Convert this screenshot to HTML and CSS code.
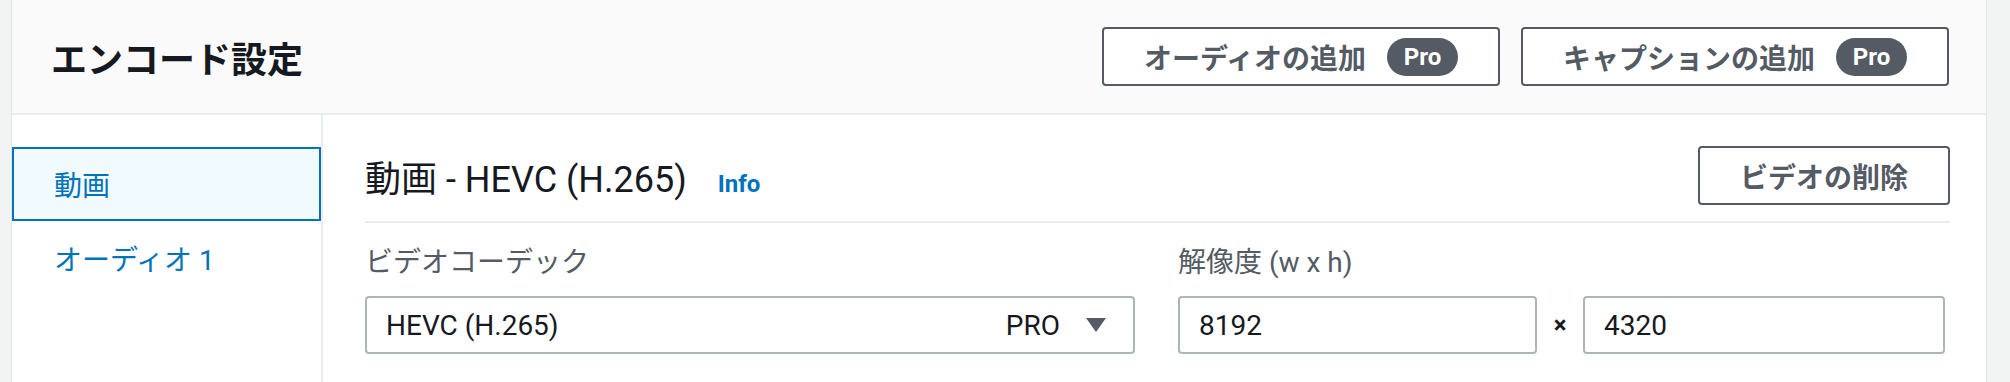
FILE: index.html
```html
<!DOCTYPE html>
<html lang="ja">
<head>
  <meta charset="UTF-8" />
  <title>エンコード設定</title>
  <link rel="stylesheet" href="styles.css">
</head>
<body>

  <div class="page">
    <div class="gutter left"></div>

    <div class="panel">
      <!-- Header -->
      <div class="panel-header">
        <h2 class="panel-title">エンコード設定</h2>
        <div class="actions">
          <button class="btn">オーディオの追加 <span class="badge">Pro</span></button>
          <button class="btn">キャプションの追加 <span class="badge">Pro</span></button>
        </div>
      </div>

      <div class="panel-body">
        <!-- Track list -->
        <div class="side">
          <div class="side-item selected">動画</div>
          <div class="side-item">オーディオ 1</div>
        </div>

        <!-- Video settings -->
        <div class="main">
          <div class="title-row">
            <h3 class="section-title">動画 - HEVC (H.265) <a class="info" href="#">Info</a></h3>
            <button class="btn">ビデオの削除</button>
          </div>

          <div class="fields">
            <div class="field">
              <label>ビデオコーデック</label>
              <div class="select">
                <span class="select-value">HEVC (H.265)</span>
                <span class="select-tag">PRO</span>
                <svg class="caret" width="20" height="14" viewBox="0 0 20 14"><path d="M0 0 H20 L10 14 Z" fill="#545b64"/></svg>
              </div>
            </div>
            <div class="field">
              <label>解像度 (w x h)</label>
              <div class="res-row">
                <input class="text-input w" value="8192">
                <span class="times">×</span>
                <input class="text-input h" value="4320">
              </div>
            </div>
          </div>
        </div>
      </div>
    </div>

    <div class="gutter right"></div>
  </div>

</body>
</html>
```

FILE: styles.css
```css
body {
  margin: 0;
  font-family: Roboto, "Noto Sans CJK JP", sans-serif;
  font-size: 28px;
  color: #16191f;
  background: #fff;
}

.page {
  display: flex;
  width: 2010px;
  height: 382px;
  overflow: hidden;
}

.gutter {
  background: #f2f3f3;
}

.gutter.left {
  width: 11px;
  border-right: 1px solid #e1e4e4;
}

.gutter.right {
  width: 23px;
  border-left: 1px solid #e1e4e4;
}

.panel {
  flex: 1;
  display: flex;
  flex-direction: column;
}

.panel-header {
  display: flex;
  align-items: center;
  justify-content: space-between;
  height: 113px;
  padding: 0 37px 0 39px;
  background: #fafafa;
  border-bottom: 2px solid #eaeded;
}

.panel-title {
  margin: 0;
  font-size: 36px;
  font-weight: 700;
  color: #16191f;
}

.actions {
  display: flex;
  gap: 21px;
}

.btn {
  display: inline-flex;
  align-items: center;
  gap: 21px;
  height: 59px;
  padding: 0 40px;
  border: 2px solid #545b64;
  border-radius: 4px;
  background: #fff;
  color: #545b64;
  font-family: inherit;
  font-size: 28px;
  font-weight: 700;
  cursor: pointer;
}

.badge {
  display: inline-flex;
  align-items: center;
  justify-content: center;
  width: 71px;
  height: 38px;
  border-radius: 19px;
  background: #545b64;
  color: #fff;
  font-size: 24px;
  font-weight: 700;
}

.panel-body {
  flex: 1;
  display: flex;
}

.side {
  width: 309px;
  padding-top: 32px;
  border-right: 2px solid #eaeded;
}

.side-item {
  display: flex;
  align-items: center;
  height: 74px;
  box-sizing: border-box;
  padding-left: 40px;
  border: 2px solid transparent;
  color: #0073bb;
}

.side-item.selected {
  border-color: #0073bb;
  background: #f1faff;
}

.main {
  flex: 1;
  padding: 31px 36px 0 42px;
}

.title-row {
  display: flex;
  align-items: center;
  justify-content: space-between;
  height: 59px;
  padding-bottom: 16px;
  border-bottom: 2px solid #eaeded;
}

.section-title {
  margin: 0;
  font-size: 36px;
  font-weight: 400;
  color: #16191f;
}

.info {
  margin-left: 22px;
  font-size: 24px;
  font-weight: 700;
  color: #0073bb;
  text-decoration: none;
}

.fields {
  display: flex;
  gap: 43px;
  padding-top: 22px;
}

.field label {
  display: block;
  height: 36px;
  line-height: 36px;
  margin-bottom: 15px;
  color: #545b64;
}

.select {
  display: flex;
  align-items: center;
  width: 770px;
  height: 58px;
  box-sizing: border-box;
  padding: 0 27px 0 19px;
  border: 2px solid #aab7b8;
  border-radius: 4px;
}

.select-value {
  flex: 1;
}

.select-tag {
  margin-right: 26px;
}

.res-row {
  display: flex;
  align-items: center;
}

.text-input {
  height: 58px;
  box-sizing: border-box;
  padding: 0 19px;
  border: 2px solid #aab7b8;
  border-radius: 4px;
  font-family: inherit;
  font-size: 28px;
  color: #16191f;
}

.text-input.w {
  width: 359px;
}

.text-input.h {
  width: 362px;
}

.times {
  width: 46px;
  text-align: center;
  font-weight: 700;
  font-size: 24px;
}
```
